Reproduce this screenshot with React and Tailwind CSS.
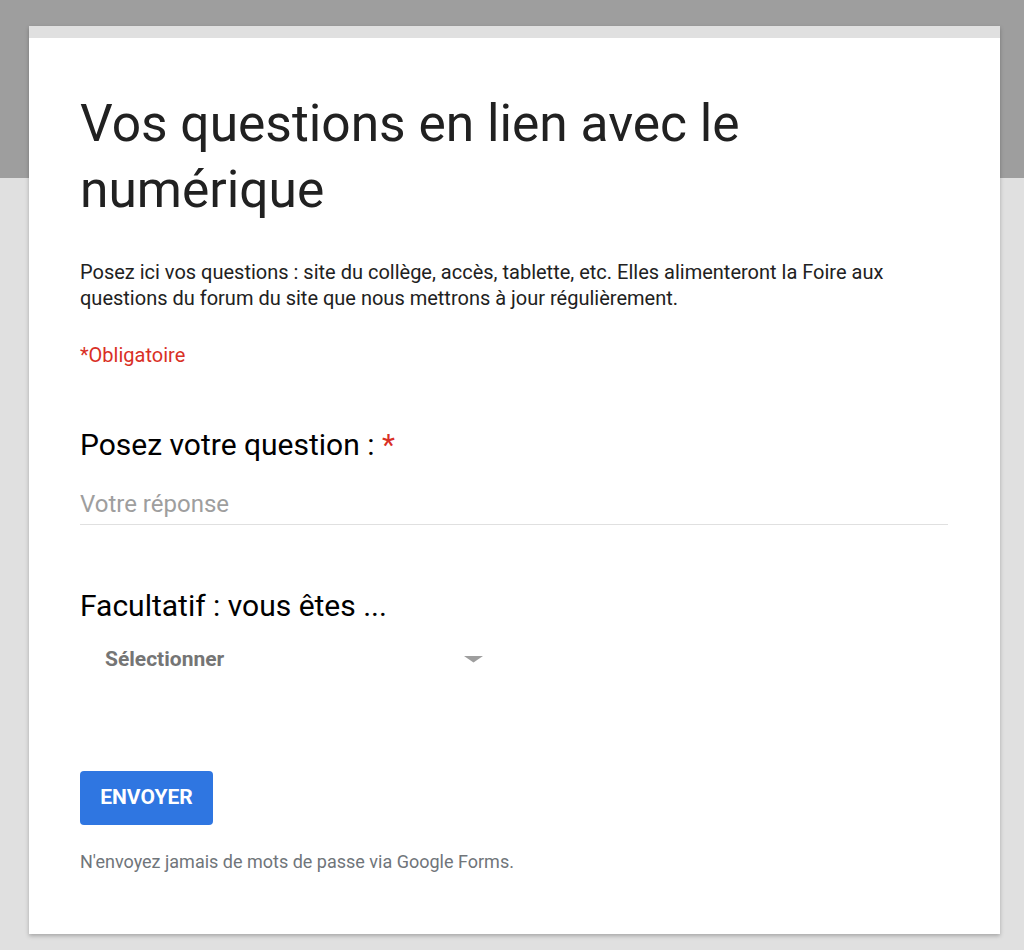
export default function App() {
  return (
    <div className="min-h-[950px] w-full bg-[linear-gradient(#9e9e9e_178px,#e0e0e0_178px)] pt-[26px] font-['Roboto',sans-serif]">
      <div className="ml-[29px] w-[971px] bg-white shadow-[0_2px_4px_rgba(0,0,0,0.25)]">
        <div className="h-[12px] bg-[#e0e0e0]" />
        <div className="pl-[51px] pr-[52px] pt-[53px] pb-[60px]">
          <h1 className="text-[51.5px] leading-[66px] text-[#212121]">
            Vos questions en lien avec le<br />numérique
          </h1>

          <p className="mt-[36px] text-[20px] leading-[26px] text-[#212121]">
            Posez ici vos questions : site du collège, accès, tablette, etc. Elles alimenteront la Foire aux questions du forum du site que nous mettrons à jour régulièrement.
          </p>

          <p className="mt-[31px] text-[20px] leading-[26px] text-[#d93025]">*Obligatoire</p>

          <div className="mt-[59px]">
            <h2 className="text-[30px] leading-[36px] text-black">
              Posez votre question : <span className="text-[#d93025]">*</span>
            </h2>
            <div className="mt-[26px] border-b border-[#e0e0e0] pb-[5px] text-[24px] leading-[30px] text-[#9e9e9e]">
              Votre réponse
            </div>
          </div>

          <div className="mt-[63px]">
            <h2 className="text-[30px] leading-[36px] text-black">Facultatif : vous êtes ...</h2>
            <div className="mt-[21px] flex w-[403px] items-center justify-between pl-[25px]">
              <span className="text-[21px] font-bold leading-[28px] text-[#757575]">Sélectionner</span>
              <svg width="19" height="7" viewBox="0 0 19 7">
                <path d="M0 0 L19 0 L9.5 6.5 Z" fill="#9e9e9e" />
              </svg>
            </div>
          </div>

          <button className="mt-[98px] block h-[54px] w-[133px] rounded-[4px] bg-[#2f76e1] text-[21px] font-bold text-white">
            ENVOYER
          </button>

          <p className="mt-[25px] text-[18px] leading-[24px] text-[#70757a]">
            N'envoyez jamais de mots de passe via Google Forms.
          </p>
        </div>
      </div>
    </div>
  );
}
